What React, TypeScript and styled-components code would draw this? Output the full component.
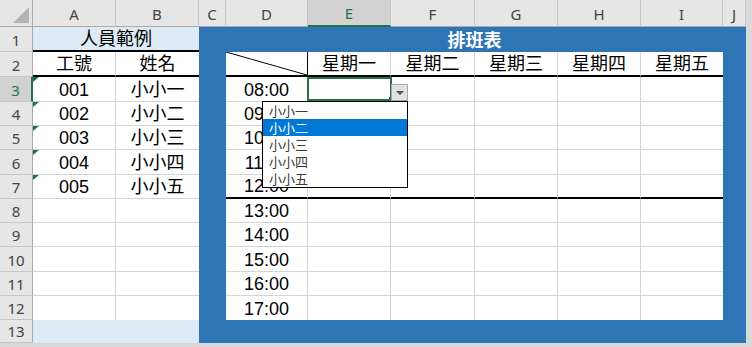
import React from 'react';
import styled, { createGlobalStyle, css } from 'styled-components';

const GRID = '#d4d4d4';
const GREEN = '#217346';
const BLUE = '#2e75b6';
const PALE = '#ddebf7';
const HEAD_BG = '#e6e6e6';
const HEAD_ACTIVE = '#d2d2d2';

const GlobalStyle = createGlobalStyle`
  html, body {
    margin: 0;
    padding: 0;
    background: #d9d9d9;
  }
  body {
    font-family: "Liberation Sans", "Noto Sans CJK TC", sans-serif;
    color: #000;
  }
`;

// 欄寬、列高（px）
const columns = [
  { label: 'A', width: 83 },
  { label: 'B', width: 83 },
  { label: 'C', width: 27 },
  { label: 'D', width: 82 },
  { label: 'E', width: 83 },
  { label: 'F', width: 84 },
  { label: 'G', width: 83 },
  { label: 'H', width: 83 },
  { label: 'I', width: 82 },
  { label: 'J', width: 23 },
];
const rowHeights = [25, 25, 25, 24, 24, 25, 24, 24, 24, 25, 24, 24, 23];
const activeColumn = 'E';
const activeRow = 3;

const staff = [
  { id: '001', name: '小小一' },
  { id: '002', name: '小小二' },
  { id: '003', name: '小小三' },
  { id: '004', name: '小小四' },
  { id: '005', name: '小小五' },
];
const weekdays = ['星期一', '星期二', '星期三', '星期四', '星期五'];
const hours = ['08:00', '09:00', '10:00', '11:00', '12:00', '13:00', '14:00', '15:00', '16:00', '17:00'];

const px = (list: number[]) => list.map((h) => `${h}px`).join(' ');

// 工作表外框
const Sheet = styled.div`
  display: grid;
  grid-template-columns: 33px auto;
  grid-template-rows: 27px auto;
  width: 746px;
  background: #fff;
`;

const Corner = styled.div`
  box-sizing: border-box;
  display: flex;
  align-items: flex-end;
  justify-content: flex-end;
  padding: 0 3px 3px 0;
  background: ${HEAD_BG};
  border-right: 1px solid #ababab;
  border-bottom: 1px solid #ababab;

  &::after {
    content: '';
    width: 0;
    height: 0;
    border-left: 16px solid transparent;
    border-bottom: 16px solid #b5b5b5;
  }
`;

const ColumnHeaders = styled.div`
  display: flex;
`;

const headerText = css`
  box-sizing: border-box;
  display: flex;
  align-items: center;
  justify-content: center;
  font-family: "Noto Sans", "Liberation Sans", sans-serif;
  font-size: 15px;
`;

const ColumnHead = styled.div<{ $width: number; $active?: boolean }>`
  ${headerText};
  width: ${(p) => p.$width}px;
  height: 27px;
  padding-top: 1px;
  background: ${(p) => (p.$active ? HEAD_ACTIVE : HEAD_BG)};
  color: ${(p) => (p.$active ? GREEN : '#444')};
  border-right: 1px solid #c6c6c6;
  border-bottom: ${(p) => (p.$active ? `2px solid ${GREEN}` : '1px solid #ababab')};
`;

const RowHeaders = styled.div`
  display: flex;
  flex-direction: column;
`;

const RowHead = styled.div<{ $height: number; $active?: boolean }>`
  ${headerText};
  align-items: flex-end;
  padding-bottom: 1px;
  height: ${(p) => p.$height}px;
  background: ${(p) => (p.$active ? HEAD_ACTIVE : HEAD_BG)};
  color: ${(p) => (p.$active ? GREEN : '#444')};
  border-bottom: 1px solid #c6c6c6;
  border-right: ${(p) => (p.$active ? `2px solid ${GREEN}` : '1px solid #ababab')};
`;

const Body = styled.div`
  display: flex;
`;

// 一般儲存格：格線畫在右邊與下邊
type Edge = 'grid' | 'none' | 'thin' | 'thick';
const edge = (e: Edge | undefined) => {
  switch (e) {
    case 'none':
      return 'none';
    case 'thin':
      return '1px solid #000';
    case 'thick':
      return '2px solid #000';
    default:
      return `1px solid ${GRID}`;
  }
};

const Cell = styled.div<{ $right?: Edge; $bottom?: Edge; $fill?: string; $span?: number }>`
  box-sizing: border-box;
  display: flex;
  align-items: flex-end;
  justify-content: center;
  padding-bottom: 1px;
  min-width: 0;
  font-size: 18px;
  line-height: 20px;
  white-space: nowrap;
  background: ${(p) => p.$fill ?? '#fff'};
  border-right: ${(p) => edge(p.$right)};
  border-bottom: ${(p) => edge(p.$bottom)};
  ${(p) => p.$span && `grid-column: span ${p.$span};`}
`;

// 數值以文字儲存的綠色小三角
const TextNumberCell = styled(Cell)`
  position: relative;

  &::before {
    content: '';
    position: absolute;
    top: 0;
    left: 0;
    width: 0;
    height: 0;
    border-top: 5px solid ${GREEN};
    border-right: 6px solid transparent;
  }
`;

// 斜線表頭
const SplitCell = styled(Cell)`
  position: relative;
`;

// 作用中的儲存格，疊在其他格子之上
const ActiveCell = styled(Cell)`
  position: relative;
  z-index: 2;
`;

const NameList = styled.div`
  display: grid;
  grid-template-columns: 83px 83px;
  grid-template-rows: ${px(rowHeights)};
`;

// 排班表藍色底框
const Schedule = styled.div`
  display: flex;
  flex-direction: column;
  width: 547px;
  box-sizing: border-box;
  padding: 0 23px 23px 27px;
  background: ${BLUE};
`;

const ScheduleTitle = styled.div`
  height: 25px;
  display: flex;
  align-items: flex-end;
  justify-content: center;
  padding-bottom: 1px;
  box-sizing: border-box;
  color: #fff;
  font-size: 18px;
  font-weight: bold;
  line-height: 20px;
`;

const Timetable = styled.div`
  display: grid;
  grid-template-columns: 82px 83px 84px 83px 83px 82px;
  grid-template-rows: ${px(rowHeights.slice(1, 12))};
  background: #fff;
`;

const Diagonal = styled.svg`
  position: absolute;
  inset: 0;
  width: 100%;
  height: 100%;
`;

// 選取框與下拉清單
const Selection = styled.div`
  position: absolute;
  top: 0;
  left: -1px;
  right: -2px;
  bottom: 0;
  border: 2px solid ${GREEN};
  pointer-events: none;

  &::after {
    content: '';
    position: absolute;
    right: -3px;
    bottom: -2px;
    width: 4px;
    height: 4px;
    background: ${GREEN};
  }
`;

const DropButton = styled.div`
  position: absolute;
  top: 7px;
  left: calc(100% + 1px);
  box-sizing: border-box;
  width: 17px;
  height: 17px;
  display: flex;
  align-items: center;
  justify-content: center;
  background: #e1e1e1;
  border: 1px solid #a9a9a9;

  &::after {
    content: '';
    width: 0;
    height: 0;
    margin-top: 1px;
    border-left: 4px solid transparent;
    border-right: 4px solid transparent;
    border-top: 4px solid #555;
  }
`;

const DropList = styled.ul`
  position: absolute;
  top: 24px;
  left: -46px;
  z-index: 1;
  box-sizing: border-box;
  width: 146px;
  margin: 0;
  padding: 0;
  list-style: none;
  background: #fff;
  border: 1px solid #000;
`;

const DropItem = styled.li<{ $active?: boolean }>`
  height: 17px;
  padding-left: 6px;
  font-family: "Noto Sans CJK TC", sans-serif;
  font-size: 13px;
  line-height: 17px;
  color: ${(p) => (p.$active ? '#fff' : '#3a3a3a')};
  background: ${(p) => (p.$active ? '#0078d7' : 'transparent')};
`;

const App: React.FC = () => {
  return (
    <>
      <GlobalStyle />
      <Sheet>
        <Corner />
        <ColumnHeaders>
          {columns.map((c) => (
            <ColumnHead key={c.label} $width={c.width} $active={c.label === activeColumn}>
              {c.label}
            </ColumnHead>
          ))}
        </ColumnHeaders>

        <RowHeaders>
          {rowHeights.map((h, i) => (
            <RowHead key={i} $height={h} $active={i + 1 === activeRow}>
              {i + 1}
            </RowHead>
          ))}
        </RowHeaders>

        <Body>
          {/* 人員範例 */}
          <NameList>
            <Cell $span={2} $fill={PALE} $right="none" $bottom="thick">
              人員範例
            </Cell>
            <Cell $bottom="thick">工號</Cell>
            <Cell $right="none" $bottom="thick">
              姓名
            </Cell>
            {staff.map((s) => (
              <React.Fragment key={s.id}>
                <TextNumberCell>{s.id}</TextNumberCell>
                <Cell $right="none">{s.name}</Cell>
              </React.Fragment>
            ))}
            {[8, 9, 10, 11, 12].map((r) => (
              <React.Fragment key={r}>
                <Cell $bottom={r === 12 ? 'none' : 'grid'} />
                <Cell $right="none" $bottom={r === 12 ? 'none' : 'grid'} />
              </React.Fragment>
            ))}
            <Cell $span={2} $fill={PALE} $right="none" $bottom="none" />
          </NameList>

          {/* 排班表 */}
          <Schedule>
            <ScheduleTitle>排班表</ScheduleTitle>
            <Timetable>
              <SplitCell $right="thin" $bottom="thick">
                <Diagonal viewBox="0 0 82 23" preserveAspectRatio="none">
                  <line x1="0" y1="0" x2="82" y2="23" stroke="#000" strokeWidth="1" />
                </Diagonal>
              </SplitCell>
              {weekdays.map((d, i) => (
                <Cell key={d} $bottom="thick" $right={i === weekdays.length - 1 ? 'none' : 'grid'}>
                  {d}
                </Cell>
              ))}
              {hours.map((t, r) => {
                const bottom: Edge = r === 4 ? 'thick' : r === hours.length - 1 ? 'none' : 'grid';
                return (
                  <React.Fragment key={t}>
                    <Cell $bottom={bottom}>{t}</Cell>
                    {weekdays.map((d, c) => {
                      const right: Edge = c === weekdays.length - 1 ? 'none' : 'grid';
                      if (r === 0 && c === 0) {
                        return (
                          <ActiveCell key={d} $bottom={bottom} $right={right}>
                            <Selection />
                            <DropButton />
                            <DropList>
                              {staff.map((s) => (
                                <DropItem key={s.id} $active={s.name === '小小二'}>
                                  {s.name}
                                </DropItem>
                              ))}
                            </DropList>
                          </ActiveCell>
                        );
                      }
                      return <Cell key={d} $bottom={bottom} $right={right} />;
                    })}
                  </React.Fragment>
                );
              })}
            </Timetable>
          </Schedule>
        </Body>
      </Sheet>
    </>
  );
};

export default App;
